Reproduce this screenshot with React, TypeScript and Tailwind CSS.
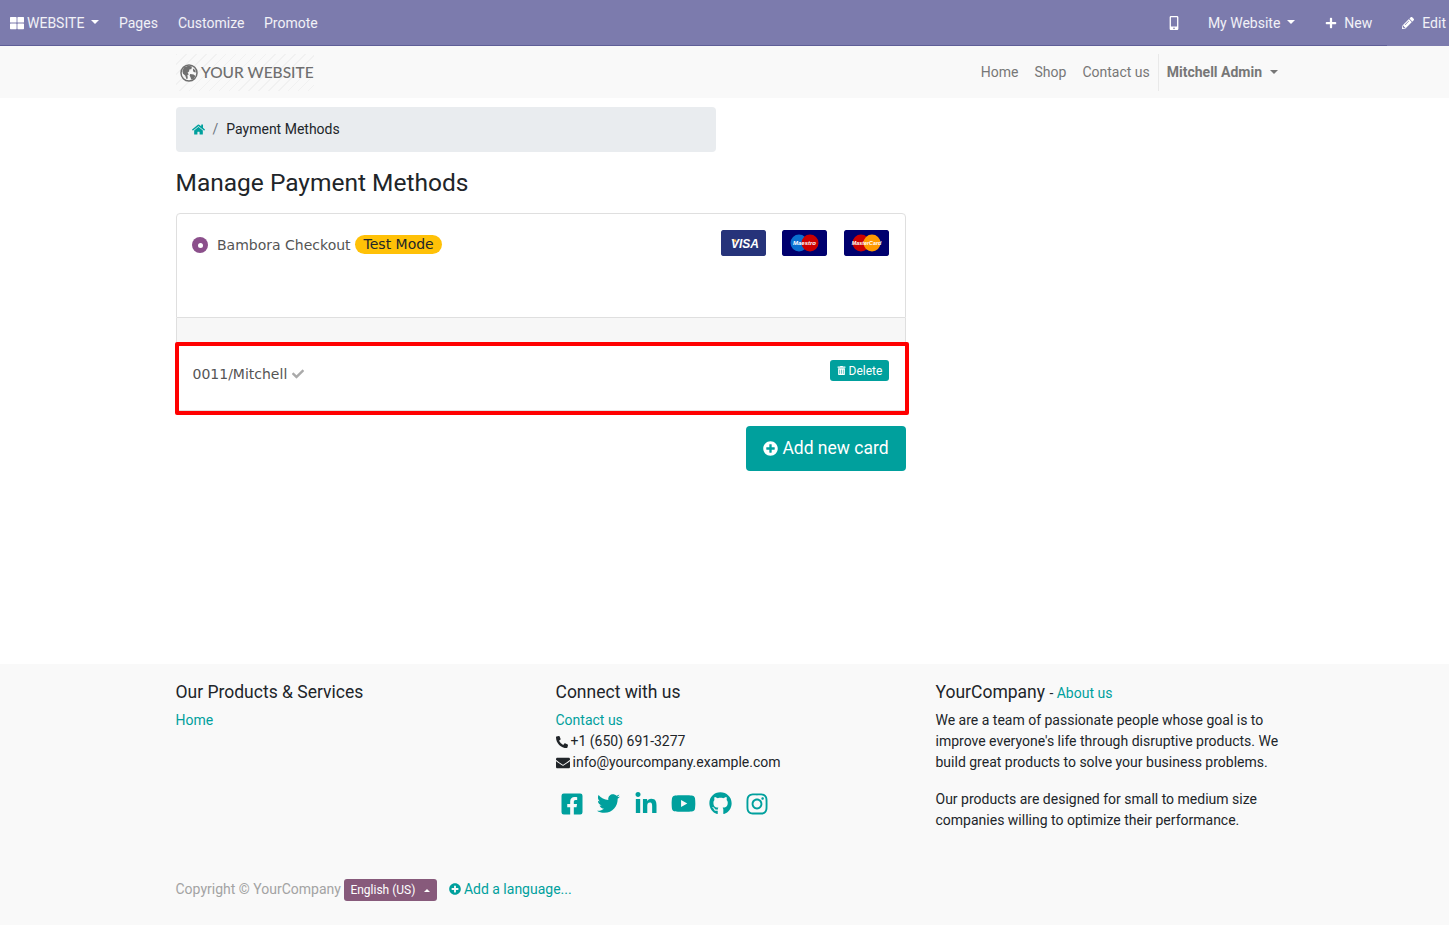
import React from "react";
import {
  FaThLarge, FaMobileAlt, FaPlus, FaPencilAlt, FaHome, FaCheck, FaTrashAlt, FaPlusCircle,
  FaPhoneAlt, FaEnvelope, FaFacebookSquare, FaTwitter, FaLinkedinIn, FaYoutube, FaGithub, FaInstagram,
} from "react-icons/fa";

const Caret = ({ color = "border-t-white" }: { color?: string }) => (
  <span className={`inline-block w-0 h-0 border-x-4 border-x-transparent border-t-4 ${color}`} />
);

function Globe() {
  return (
    <svg width="18" height="18" viewBox="0 0 18 18" className="mr-[3px] shrink-0">
      <circle cx="9" cy="9" r="8" fill="none" stroke="#6f6f6f" strokeWidth="1.5" />
      <path d="M4 3.2 L8.5 1.8 L12 2.6 L11.4 5 L9.4 5.4 L9 7.4 L7.6 8.6 L8.8 10.4 L7.4 11 L7.8 14.6 L6.4 15 L5.2 11.6 L3 9.8 L2.4 7 Z" fill="#6f6f6f" />
      <path d="M10.2 10 L13.6 10.4 L15.4 12 L13.6 15 L11.2 15.6 L10.4 13 L9.6 11.4 Z" fill="#6f6f6f" />
      <path d="M13.4 4.6 L15.4 6.4 L15.8 8.6 L13.6 8 L12.8 6 Z" fill="#6f6f6f" />
    </svg>
  );
}

function CardLogo({ kind }: { kind: "visa" | "maestro" | "mc" }) {
  if (kind === "visa") {
    return (
      <svg width="45" height="26" viewBox="0 0 45 26" className="rounded-[2px]">
        <rect width="45" height="26" rx="1.5" fill="#26337a" />
        <path d="M10 9.5 L15 9.5 L16 13 Z" fill="#eca33a" />
        <text x="24" y="17.5" textAnchor="middle" fontFamily="Liberation Sans" fontStyle="italic" fontWeight="700" fontSize="12" fill="#fff">VISA</text>
      </svg>
    );
  }
  const maestro = kind === "maestro";
  return (
    <svg width="45" height="26" viewBox="0 0 45 26" className="rounded-[2px]">
      <rect width="45" height="26" rx="1.5" fill="#00006e" />
      <circle cx="17" cy="13" r="8.5" fill={maestro ? "#0a6fd0" : "#cc0000"} />
      <circle cx="28" cy="13" r="8.5" fill={maestro ? "#cc0000" : "#ff9900"} />
      <text x="22.5" y="15" textAnchor="middle" fontFamily="Liberation Sans" fontStyle="italic" fontWeight="700" fontSize={maestro ? 6 : 5.4} fill="#fff">{maestro ? "Maestro" : "MasterCard"}</text>
    </svg>
  );
}

const social = [
  { I: FaFacebookSquare, s: "text-[24px]", w: "w-[37px]" },
  { I: FaTwitter, s: "text-[23px]", w: "w-[37px]" },
  { I: FaLinkedinIn, s: "text-[24px]", w: "w-[37px]" },
  { I: FaYoutube, s: "text-[25px]", w: "w-[38px]" },
  { I: FaGithub, s: "text-[23px]", w: "w-[37px]" },
  { I: FaInstagram, s: "text-[24px]", w: "w-[36px]" },
];

export default function App() {
  return (
    <div className="min-h-[925px] flex flex-col bg-white font-['Roboto',sans-serif] text-[14px] leading-[21px] text-[#212529]">
      {/* Top admin bar */}
      <div className="relative h-[46px] bg-[#7c7bad] border-b border-[#5f5e97] flex items-center justify-between text-white/90 shrink-0 pt-[1px]">
        <div className="flex items-center">
          <div className="flex items-center pl-[10px] w-[119px]">
            <FaThLarge className="text-white text-[14px] w-[14px] mr-[3px]" />
            <span>WEBSITE</span>
            <span className="ml-[7px] mb-[2px] flex"><Caret /></span>
          </div>
          <span className="w-[59px]">Pages</span>
          <span className="w-[86px]">Customize</span>
          <span>Promote</span>
        </div>
        <div className="flex items-center">
          <FaMobileAlt className="text-white text-[14px] mr-[27px] -ml-[1px]" />
          <span>My Website</span>
          <span className="ml-[7px] mb-[2px] flex mr-[30px]"><Caret /></span>
          <FaPlus className="text-white text-[12px] mr-[7px]" />
          <span className="mr-[30px]">New</span>
          <FaPencilAlt className="text-white text-[12px] mr-[8px]" />
          <span className="mr-[3px]">Edit</span>
        </div>
        <span className="absolute right-0 top-[45px] w-[62px] h-px bg-[#7c7bad]" />
      </div>

      {/* Site nav */}
      <div className="h-[52px] bg-[#f9f9f9] flex items-center shrink-0 pl-[176px] pr-[171px] justify-between">
        <div className="w-[138px] h-[37px] mt-[1px] flex items-center pl-[4px] bg-[repeating-linear-gradient(135deg,#f1f1f1_0px,#f1f1f1_1px,#f9f9f9_1px,#f9f9f9_7px)]">
          <Globe />
          <span className="font-['Lato',sans-serif] font-medium text-[15.5px] text-[#6f6f6f] whitespace-nowrap">YOUR WEBSITE</span>
        </div>
        <div className="flex items-center text-[#777777] h-[37px] mt-[1px]">
          <span className="mr-[16px]">Home</span>
          <span className="mr-[16px]">Shop</span>
          <span className="mr-[8px]">Contact us</span>
          <div className="h-[37px] border-l border-[#e9e9e9] pl-[8px] flex items-center">
            <span className="font-bold">Mitchell Admin</span>
            <span className="ml-[8px] mb-[2px] flex"><Caret color="border-t-[#777777]" /></span>
          </div>
        </div>
      </div>

      {/* Main */}
      <main className="flex-1 pl-[176px] pt-[9px]">
        <div className="w-[540px] h-[45px] bg-[#e9ecef] rounded-[4px] flex items-center pl-[15.5px]">
          <FaHome className="text-[#00a09d] text-[13px]" />
          <span className="text-[#6c757d] mx-[8px]">/</span>
          <span>Payment Methods</span>
        </div>
        <h1 className="text-[24.5px] leading-[29px] mt-[16px] font-normal -ml-[0.5px]">Manage Payment Methods</h1>

        <div className="w-[730px] mt-[16px] font-['DejaVu_Sans',sans-serif] text-[#555555]">
          <div className="h-[105px] border border-[#dfdfdf] rounded-t-[4px] flex justify-between pl-[15px] pr-[16px] pt-[17px]">
            <div className="flex items-start h-[26px]">
              <span className="mt-[6px] w-4 h-4 rounded-full bg-[#8b4f8b] flex items-center justify-center">
                <span className="w-[5px] h-[5px] rounded-full bg-white" />
              </span>
              <span className="ml-[9px] mt-[4px]">Bambora Checkout</span>
              <span className="ml-[4.5px] mt-[4px] h-[19px] px-[8.5px] rounded-full bg-[#ffc107] text-[#212529] text-[14px] leading-[19px]">Test Mode</span>
            </div>
            <div className="flex gap-[16px] -mt-[1px] h-[26px]">
              <CardLogo kind="visa" />
              <CardLogo kind="maestro" />
              <span className="flex ml-[1px]"><CardLogo kind="mc" /></span>
            </div>
          </div>
          <div className="h-[25px] bg-[#f7f7f7] border-x border-[#dfdfdf]" />
          <div className="relative h-[68px] border-x border-b border-[#dfdfdf] flex justify-between pl-[15.5px] pr-[16px]">
            <div className="flex items-center h-[62px]">
              <span>0011/Mitchell</span>
              <FaCheck className="ml-[5px] text-[#aaaaaa] text-[12px]" />
            </div>
            <div className="mt-[17px] h-[21px] w-[59px] rounded-[3px] bg-[#00a09d] text-white text-[12px] leading-[18px] font-['Roboto',sans-serif] flex items-center justify-center">
              <FaTrashAlt className="text-[9px] mr-[3px]" />
              Delete
            </div>
            <div className="absolute left-[-2px] right-[-4px] -top-[1px] bottom-[-5px] border-4 border-[#ff0000] rounded-[2px] pointer-events-none" />
          </div>
        </div>

        <div className="w-[730px] flex justify-end mt-[15px]">
          <div className="w-[160px] h-[45px] rounded-[4px] bg-[#00a09d] text-white text-[17.5px] flex items-center justify-center">
            <FaPlusCircle className="text-[15px] mr-[4px]" />
            Add new card
          </div>
        </div>
      </main>

      {/* Footer */}
      <footer className="h-[261px] bg-[#f9f9f9] shrink-0 pl-[175.5px]">
        <div className="flex pt-[16px]">
          <div className="w-[380px]">
            <h5 className="text-[17.5px] leading-[24px] font-normal">Our Products &amp; Services</h5>
            <div className="mt-[6px] text-[#00a09d]">Home</div>
          </div>
          <div className="w-[380px]">
            <h5 className="text-[17.5px] leading-[24px] font-normal">Connect with us</h5>
            <div className="mt-[6px] text-[#00a09d]">Contact us</div>
            <div className="flex items-center"><FaPhoneAlt className="text-[12px] mr-[3px]" />+1 (650) 691-3277</div>
            <div className="flex items-center"><FaEnvelope className="text-[14px] mr-[3px]" />info@yourcompany.example.com</div>
            <div className="flex items-center mt-[18px] -ml-[2.5px] text-[#00a09d]">
              {social.map(({ I, s, w }, i) => (
                <span key={i} className={`${w} flex justify-center`}><I className={s} /></span>
              ))}
            </div>
          </div>
          <div className="w-[346px]">
            <h5 className="text-[17.5px] leading-[24px] font-normal">
              YourCompany <span className="text-[14px] text-[#212529]">- </span><span className="text-[14px] text-[#00a09d]">About us</span>
            </h5>
            <p className="mt-[5px]">We are a team of passionate people whose goal is to improve everyone's life through disruptive products. We build great products to solve your business problems.</p>
            <p className="mt-[16px]">Our products are designed for small to medium size companies willing to optimize their performance.</p>
          </div>
        </div>
        <div className="flex items-center mt-[47px]">
          <span className="text-[#a3a3a3]">Copyright © YourCompany</span>
          <div className="ml-[3px] w-[93px] h-[22px] rounded-[3px] bg-[#875a7b] text-white text-[12px] flex items-center pl-[6.5px] relative top-[1px]">
            <span className="mr-[9px] whitespace-nowrap">English (US)</span>
            <span className="flex"><span className="inline-block w-0 h-0 border-x-[3px] border-x-transparent border-b-[3px] border-b-white" /></span>
          </div>
          <FaPlusCircle className="ml-[12px] text-[#00a09d] text-[12px] mr-[3px]" />
          <span className="text-[#00a09d]">Add a language...</span>
        </div>
      </footer>
    </div>
  );
}
